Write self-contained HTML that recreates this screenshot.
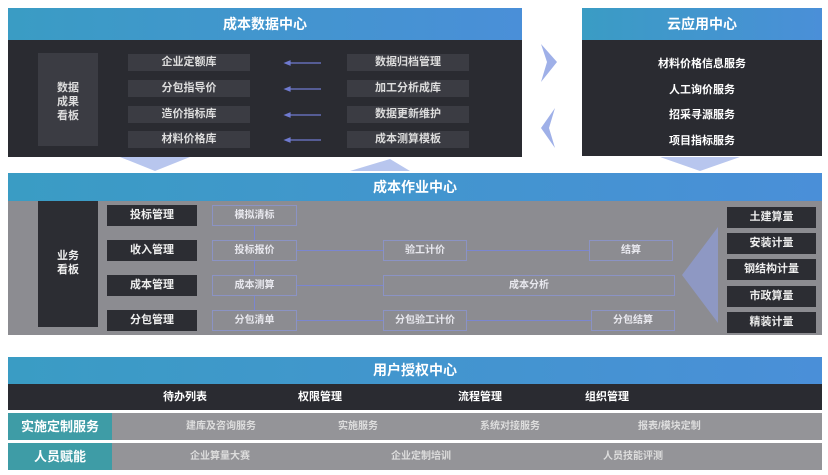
<!DOCTYPE html><html><head><meta charset="utf-8"><style>
body{margin:0;width:828px;height:475px;background:#fff;position:relative;overflow:hidden;font-family:"Liberation Sans","Noto Sans CJK SC",sans-serif;font-weight:bold}
div{position:absolute;box-sizing:border-box}
.hd{background:linear-gradient(90deg,#3a9cc4,#4a8fd8);color:#fff;font-size:14px;text-align:center}
.dk{background:#2a2b31}
.it{background:#3b3c43;color:#ddd;font-size:11px;text-align:center;line-height:17px}
.gl{color:#fff;font-size:11px;text-align:center}
.rl{background:#2c2d33;color:#eee;font-size:11px;text-align:center;line-height:21px}
.fb{border:1px solid #8b93c4;color:#e8e8ee;font-size:10px;text-align:center;line-height:19px;background:transparent}
.ln{background:#7b86d0;height:1px}
.vl{background:#7b86d0;width:1px}
</style></head><body>
<div class="hd" style="left:8px;top:8px;width:514px;height:32px;line-height:32px">成本数据中心</div>
<div class="dk" style="left:8px;top:40px;width:514px;height:117px"></div>
<div class="it" style="left:38px;top:53px;width:60px;height:93px;line-height:14px;padding-top:28px">数据<br>成果<br>看板</div>
<div class="it" style="left:128px;top:54px;width:122px">企业定额库</div>
<div class="it" style="left:128px;top:80px;width:122px">分包指导价</div>
<div class="it" style="left:128px;top:106px;width:122px">造价指标库</div>
<div class="it" style="left:128px;top:131px;width:122px">材料价格库</div>
<div class="it" style="left:347px;top:54px;width:122px">数据归档管理</div>
<div class="it" style="left:347px;top:80px;width:122px">加工分析成库</div>
<div class="it" style="left:347px;top:106px;width:122px">数据更新维护</div>
<div class="it" style="left:347px;top:131px;width:122px">成本测算模板</div>
<svg style="position:absolute;left:283px;top:58px" width="40" height="90">
<g stroke="#6f7ad0" stroke-width="1.2" fill="#6f7ad0">
<line x1="4" y1="5" x2="38" y2="5"/><polygon points="2,5 7,3 7,7"/>
<line x1="4" y1="31" x2="38" y2="31"/><polygon points="2,31 7,29 7,33"/>
<line x1="4" y1="57" x2="38" y2="57"/><polygon points="2,57 7,55 7,59"/>
<line x1="4" y1="82" x2="38" y2="82"/><polygon points="2,82 7,80 7,84"/></g></svg>
<svg style="position:absolute;left:535px;top:40px" width="30" height="110"><polygon points="6,4 22,22 6,42 12,22" fill="#9fb0e8"/><polygon points="20,68 6,88 20,108 14,88" fill="#9fb0e8"/></svg>
<div class="hd" style="left:582px;top:8px;width:240px;height:32px;line-height:32px">云应用中心</div>
<div class="dk" style="left:582px;top:40px;width:240px;height:116px"></div>
<div class="gl" style="left:582px;top:55px;width:240px">材料价格信息服务</div>
<div class="gl" style="left:582px;top:81px;width:240px">人工询价服务</div>
<div class="gl" style="left:582px;top:106px;width:240px">招采寻源服务</div>
<div class="gl" style="left:582px;top:132px;width:240px">项目指标服务</div>
<svg style="position:absolute;left:0;top:157px" width="828" height="16"><polygon points="120,0 190,0 155,14" fill="#b8c6ee"/><polygon points="350,14 410,14 390,2" fill="#b8c6ee"/><polygon points="660,0 740,0 700,14" fill="#b8c6ee"/></svg>
<div class="hd" style="left:8px;top:173px;width:814px;height:28px;line-height:28px">成本作业中心</div>
<div style="left:8px;top:201px;width:814px;height:134px;background:#8c8c91"></div>
<div class="rl" style="left:38px;top:201px;width:60px;height:126px;line-height:14px;padding-top:48px">业务<br>看板</div>
<div class="rl" style="left:107px;top:205px;width:90px">投标管理</div>
<div class="rl" style="left:107px;top:240px;width:90px">收入管理</div>
<div class="rl" style="left:107px;top:275px;width:90px">成本管理</div>
<div class="rl" style="left:107px;top:310px;width:90px">分包管理</div>
<div class="vl" style="left:254px;top:226px;height:84px"></div>
<div class="fb" style="left:212px;top:205px;width:85px;height:21px;background:#8c8c91">模拟清标</div>
<div class="fb" style="left:212px;top:240px;width:85px;height:21px;background:#8c8c91">投标报价</div>
<div class="fb" style="left:212px;top:275px;width:85px;height:21px;background:#8c8c91">成本测算</div>
<div class="fb" style="left:212px;top:310px;width:85px;height:21px;background:#8c8c91">分包清单</div>
<div class="fb" style="left:383px;top:240px;width:84px;height:21px">验工计价</div>
<div class="fb" style="left:589px;top:240px;width:84px;height:21px">结算</div>
<div class="fb" style="left:383px;top:275px;width:292px;height:21px">成本分析</div>
<div class="fb" style="left:383px;top:310px;width:84px;height:21px">分包验工计价</div>
<div class="fb" style="left:591px;top:310px;width:84px;height:21px">分包结算</div>
<div class="ln" style="left:297px;top:250px;width:86px"></div><div class="ln" style="left:297px;top:285px;width:86px"></div><div class="ln" style="left:297px;top:320px;width:86px"></div>
<div class="ln" style="left:467px;top:250px;width:122px"></div><div class="ln" style="left:467px;top:320px;width:124px"></div>
<svg style="position:absolute;left:680px;top:225px" width="40" height="100"><polygon points="38,2 38,98 2,50" fill="#8f9cd8" opacity=".7"/></svg>
<div class="rl" style="left:727px;top:207px;width:89px">土建算量</div>
<div class="rl" style="left:727px;top:233px;width:89px">安装计量</div>
<div class="rl" style="left:727px;top:259px;width:89px">钢结构计量</div>
<div class="rl" style="left:727px;top:286px;width:89px">市政算量</div>
<div class="rl" style="left:727px;top:312px;width:89px">精装计量</div>
<div class="hd" style="left:8px;top:357px;width:814px;height:27px;line-height:27px">用户授权中心</div>
<div class="dk" style="left:8px;top:384px;width:814px;height:26px;color:#fff;font-size:11px;line-height:26px">
<span style="position:absolute;left:155px">待办列表</span><span style="position:absolute;left:290px">权限管理</span><span style="position:absolute;left:450px">流程管理</span><span style="position:absolute;left:577px">组织管理</span></div>
<div style="left:8px;top:413px;width:814px;height:27px;background:#949498;color:#ddd;font-size:10px;line-height:27px">
<span style="position:absolute;left:178px">建库及咨询服务</span><span style="position:absolute;left:330px">实施服务</span><span style="position:absolute;left:472px">系统对接服务</span><span style="position:absolute;left:630px">报表/模块定制</span></div>
<div style="left:8px;top:413px;height:27px;background:#3e9ca6;color:#fff;font-size:13px;line-height:27px;text-align:center;width:104px">实施定制服务</div>
<div style="left:8px;top:443px;width:814px;height:27px;background:#949498;color:#ddd;font-size:10px;line-height:27px">
<span style="position:absolute;left:182px">企业算量大赛</span><span style="position:absolute;left:383px">企业定制培训</span><span style="position:absolute;left:595px">人员技能评测</span></div>
<div style="left:8px;top:443px;height:27px;background:#3e9ca6;color:#fff;font-size:13px;line-height:27px;text-align:center;width:104px">人员赋能</div>
</body></html>
